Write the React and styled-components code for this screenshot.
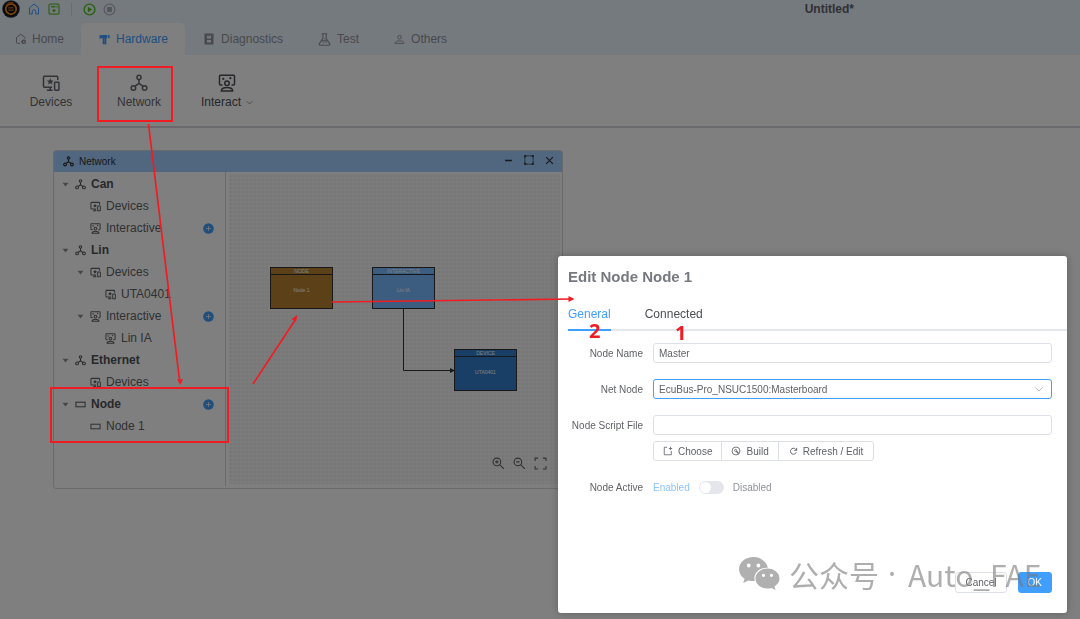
import React from "react";
import styled, { createGlobalStyle } from "styled-components";

const Global = createGlobalStyle`
  *, *::before, *::after { box-sizing: border-box; }
  body {
    margin: 0;
    font-family: "Liberation Sans", "Noto Sans CJK SC", sans-serif;
    font-size: 12px;
    color: #606266;
    background: #808080;
    overflow: hidden;
  }
  button, input, select { font: inherit; color: inherit; margin: 0; }
  button { background: none; border: 0; padding: 0; }
  svg { display: block; flex: none; }
`;

/* ---------- icons ---------- */

const Icon = ({ size = 24, children, w = 2, ...rest }) => (
  <svg
    width={size}
    height={size}
    viewBox="0 0 24 24"
    fill="none"
    stroke="currentColor"
    strokeWidth={w}
    aria-hidden="true"
    {...rest}
  >
    {children}
  </svg>
);

const NetworkIcon = (p) => (
  <Icon {...p}>
    <circle cx="12" cy="4.5" r="2.700" />
    <circle cx="4.500" cy="18.500" r="3" />
    <circle cx="19.500" cy="18.500" r="3" />
    <path d="M12 7.200V13M12 12.500l-5.500 4M12 12.500l5.500 4" />
  </Icon>
);
const DevicesIcon = (p) => (
  <Icon {...p}>
    <path d="M13.500 17.500H3.200a1.200 1.200 0 0 1-1.200-1.200V4.200a1.200 1.200 0 0 1 1.200-1.200h16.600a1.200 1.200 0 0 1 1.200 1.200V8" />
    <path d="M6.500 21.500h7.500M11 17.500v4" />
    <rect x="16.800" y="11" width="5.800" height="10.500" rx="0.800" />
    <path d="M11 5.500l1.300 3 3.200.3-2.400 2.100.8 3.100-2.900-1.700-2.900 1.700.8-3.100-2.400-2.100 3.200-.3z" fill="currentColor" stroke="none" />
  </Icon>
);
const InteractIcon = (p) => (
  <Icon {...p}>
    <path d="M6 14.500H3.200A1.200 1.200 0 0 1 2 13.300V2.700A1.200 1.200 0 0 1 3.200 1.500h17.600A1.200 1.200 0 0 1 22 2.700v10.600a1.200 1.200 0 0 1-1.200 1.200H18" />
    <circle cx="12" cy="12.200" r="3" />
    <path d="M4.500 22.500c0-3.500 3.500-4.500 7.500-4.500s7.500 1 7.500 4.500z" />
    <path d="M5.500 6.500h3M7 5v3M15 5.500h3M16.500 4v3" strokeWidth="1.500" />
  </Icon>
);
const NodeIcon = (p) => (
  <Icon {...p}>
    <rect x="2" y="7" width="20" height="10" />
  </Icon>
);
const HouseIcon = (p) => (
  <Icon {...p}>
    <path d="M3 22V9.500L12 2l9 7.500V22h-5.500v-5a3.500 3.500 0 0 0-7 0v5z" />
  </Icon>
);
const SaveIcon = (p) => (
  <Icon {...p}>
    <rect x="2" y="2" width="20" height="20" rx="2" />
    <path d="M6 7.500h9" strokeWidth="3" />
    <circle cx="12" cy="15" r="3.200" fill="currentColor" stroke="none" />
    <path d="M18 6v3" />
  </Icon>
);
const PlayIcon = (p) => (
  <Icon {...p}>
    <circle cx="12" cy="12" r="10" />
    <path d="M9 7v10l8-5z" fill="currentColor" stroke="none" />
  </Icon>
);
const StopIcon = (p) => (
  <Icon {...p}>
    <circle cx="12" cy="12" r="10" />
    <rect x="7.500" y="7.500" width="9" height="9" fill="currentColor" stroke="none" />
  </Icon>
);
const HomeTabIcon = (p) => (
  <Icon {...p}>
    <path d="M10 20.500H4.500A1.500 1.500 0 0 1 3 19V9l8.500-6.500L20 9v2.500" />
    <circle cx="17.500" cy="17.500" r="3.200" strokeWidth="3" />
    <path d="M12 17.500h2" />
  </Icon>
);
const HardwareIcon = (p) => (
  <Icon {...p}>
    <path d="M1 3.500L4 2h14v7h-2v13.500H8V9H4.500L1 10.500z" fill="currentColor" stroke="none" />
    <path d="M19.500 2H23v7.500l-3.500-1z" fill="currentColor" stroke="none" />
    <path d="M12 9.500v10" stroke="#fff" strokeWidth="1.500" opacity="0.400" />
  </Icon>
);
const DiagnosticsIcon = (p) => (
  <Icon {...p}>
    <path fillRule="evenodd" d="M4 1h16a1 1 0 0 1 1 1v20a1 1 0 0 1-1 1H4a1 1 0 0 1-1-1V2a1 1 0 0 1 1-1zM8 5v6h8V5zM8 14v5h8v-5zM11 5h2v2h-2z" fill="currentColor" stroke="none" />
  </Icon>
);
const TestIcon = (p) => (
  <Icon {...p}>
    <path d="M7 1.500h10M9 2v8L2 20.500a1.500 1.500 0 0 0 1.300 2h17.400a1.500 1.500 0 0 0 1.300-2L15 10V2" />
    <path d="M6.500 14.500h11M9 18.500h2M14 18h2M11.500 11h2" />
  </Icon>
);
const OthersIcon = (p) => (
  <Icon {...p}>
    <circle cx="12" cy="7" r="4" />
    <path d="M2.500 20.500v-1.500c0-2.500 4-4 9.500-4s9.500 1.500 9.500 4v1.500z" />
  </Icon>
);
const ChevronIcon = (p) => (
  <Icon {...p}>
    <path d="M3 8l9 9 9-9" />
  </Icon>
);
const CaretIcon = (p) => (
  <Icon {...p}>
    <path d="M4 7h16l-8 10z" fill="currentColor" stroke="none" />
  </Icon>
);
const PlusIcon = (p) => (
  <Icon {...p}>
    <circle cx="12" cy="12" r="11.500" fill="#409eff" stroke="none" />
    <path d="M12 7v10M7 12h10" stroke="#e4e7ed" strokeWidth="2.200" />
  </Icon>
);
const MinusIcon = (p) => (
  <Icon {...p}>
    <path d="M3 12h18" />
  </Icon>
);
const MaximizeIcon = (p) => (
  <Icon {...p}>
    <rect x="2" y="2" width="20" height="20" strokeDasharray="3 1" />
    <path d="M2 6V2h4M18 2h4v4M22 18v4h-4M6 22H2v-4" strokeWidth="3" />
  </Icon>
);
const CloseIcon = (p) => (
  <Icon {...p}>
    <path d="M3 3l18 18M21 3L3 21" />
  </Icon>
);
const ZoomInIcon = (p) => (
  <Icon {...p}>
    <circle cx="9" cy="9" r="7" />
    <path d="M14 14l8 8M9 6v6M6 9h6" />
  </Icon>
);
const ZoomOutIcon = (p) => (
  <Icon {...p}>
    <circle cx="9" cy="9" r="7" />
    <path d="M14 14l8 8M6 9h6" />
  </Icon>
);
const FitIcon = (p) => (
  <Icon {...p}>
    <path d="M2 7.500V2h5.500M16.500 2H22v5.500M22 16.500V22h-5.500M7.500 22H2v-5.500" />
  </Icon>
);
const ChooseIcon = (p) => (
  <Icon {...p}>
    <path d="M10 3H3v18h17v-9" />
    <path d="M18 2v8M14 6h8" />
  </Icon>
);
const BuildIcon = (p) => (
  <Icon {...p}>
    <circle cx="12" cy="12" r="9.500" />
    <circle cx="11" cy="10.500" r="2.500" />
    <path d="M13 12.500l5 5.500" strokeWidth="3" />
  </Icon>
);
const RefreshIcon = (p) => (
  <Icon {...p}>
    <path d="M19.500 14a8 8 0 1 1-2-8.500L20 8" />
    <path d="M20.500 2.500V9H14" />
  </Icon>
);
const Logo = () => (
  <svg width="18" height="18" viewBox="0 0 36 36" aria-hidden="true">
    <circle cx="18" cy="18" r="17.500" fill="#1c2c40" />
    <circle cx="18" cy="18" r="15" fill="#120c08" />
    <circle cx="18" cy="18" r="10.500" fill="none" stroke="#f08a1c" strokeWidth="3.500" />
    <path d="M9 10a12 12 0 0 1 14-4" fill="none" stroke="#c05a10" strokeWidth="3" />
    <path d="M13 15h10M12 18h12M13 21h10" stroke="#c8741c" strokeWidth="1.500" />
  </svg>
);
const ChatLogo = () => (
  <svg width="41" height="34" viewBox="0 0 41 34" aria-hidden="true">
    <path
      fillRule="evenodd"
      fill="#b0b0b0"
      d="M14.500 0C6.500 0 0 5.400 0 12.200c0 3.900 2.200 7.300 5.600 9.600L4.200 26l5.200-2.600c1.700.5 3.300.7 5.200.7h1.200a9.800 9.800 0 0 1-.4-2.700c0-6 5.600-10.600 12.300-10.600h1.200C27.400 4.600 21.500 0 14.500 0zM9.800 6.600a1.900 1.900 0 1 1 0 3.800 1.900 1.900 0 0 1 0-3.800zM19.400 6.600a1.900 1.900 0 1 1 0 3.800 1.900 1.900 0 0 1 0-3.800z"
    />
    <path
      fillRule="evenodd"
      fill="#b0b0b0"
      d="M28.500 11.500c-6.800 0-12 4.500-12 10s5.200 10 12 10c1.400 0 2.800-.3 4.100-.6l4 2.100-1.100-3.500c3-2 5-4.800 5-8 0-5.500-5.200-10-12-10zM24.500 16.700a1.600 1.600 0 1 1 0 3.200 1.600 1.600 0 0 1 0-3.200zM32.500 16.700a1.600 1.600 0 1 1 0 3.200 1.600 1.600 0 0 1 0-3.200z"
    />
  </svg>
);

/* ---------- application shell ---------- */

const Shell = styled.div`
  min-height: 100vh;
  display: flex;
  flex-direction: column;
  background: #fff;
`;
const Header = styled.header`
  background: #ebf4ff;
`;
const TitleBar = styled.div`
  display: flex;
  align-items: center;
  gap: 7px;
  height: 18px;
  padding: 0 226px 0 2px;
`;
const QuickButton = styled.button`
  display: grid;
  place-items: center;
  width: 13px;
  height: 17px;
  color: ${(p) => p.$color};
`;
const Separator = styled.span`
  width: 1px;
  height: 13px;
  margin: 0 4px;
  background: #d0d6e0;
`;
const AppTitle = styled.h1`
  margin: 0 0 0 auto;
  font-size: 12px;
  line-height: 18px;
  color: #606266;
`;
const Tabs = styled.nav`
  display: flex;
  height: 37px;
  padding-top: 5px;
`;
const Tab = styled.button`
  display: flex;
  align-items: center;
  gap: 6px;
  padding: 0 17px 0 18px;
  border-radius: 5px 5px 0 0;
  color: ${(p) => (p.$active ? "#409eff" : "#909399")};
  background: ${(p) => (p.$active ? "#fff" : "transparent")};
  &:first-child { padding-left: 15px; gap: 5px; }
`;
const Toolbar = styled.div`
  display: flex;
  height: 73px;
  padding: 19px 0 0 7px;
  border-bottom: 2px solid #d4d4d8;
`;
const Tool = styled.button`
  display: flex;
  flex-direction: column;
  align-items: center;
  gap: 2px;
  width: 88px;
  height: 36px;
  color: ${(p) => (p.$dark ? "#4c4e54" : "#65676c")};
`;
const ToolLabel = styled.span`
  display: flex;
  align-items: center;
  gap: 5px;
  line-height: 16px;
`;
const Desktop = styled.main`
  position: relative;
  flex: 1;
`;

/* ---------- network window ---------- */

const Window = styled.section`
  position: absolute;
  left: 53px;
  top: 22px;
  width: 510px;
  height: 339px;
  display: flex;
  flex-direction: column;
  border: 1px solid #d4d4d8;
  border-radius: 3px;
  overflow: hidden;
`;
const WindowBar = styled.div`
  display: flex;
  align-items: center;
  gap: 5px;
  height: 21px;
  flex: none;
  padding: 0 8px 0 9px;
  font-size: 10px;
  color: #303133;
  background: #a0cfff;
`;
const WindowActions = styled.div`
  display: flex;
  gap: 11px;
  margin-left: auto;
  padding-bottom: 3px;
`;
const WindowBody = styled.div`
  display: flex;
  flex: 1;
  padding-bottom: 2px;
`;
const Tree = styled.ul`
  list-style: none;
  margin: 0;
  padding: 1px 0 0;
  width: 172px;
  border-right: 1px solid #d4d4d8;
`;
const TreeRow = styled.li`
  display: flex;
  align-items: center;
  gap: 5px;
  height: 22px;
  padding: 0 11px 0 ${(p) => 6 + p.$level * 15}px;
  font-weight: ${(p) => (p.$level ? 400 : 700)};
  color: ${(p) => (p.$level ? "#606266" : "#505257")};
`;
const CaretSlot = styled.span`
  width: 10px;
  display: grid;
  place-items: center;
  color: #8c8f96;
`;
const AddButton = styled.button`
  margin-left: auto;
`;
const Canvas = styled.div`
  position: relative;
  flex: 1;
  margin: 2px 2px 2px 3px;
  background: #f6f6f6 radial-gradient(#efefef 1px, transparent 1px) 0 0 / 4px 4px;
`;
const Block = styled.div`
  position: absolute;
  left: ${(p) => p.$x}px;
  top: ${(p) => p.$y}px;
  width: 63px;
  height: 42px;
  display: flex;
  flex-direction: column;
  border: 1px solid #303133;
  background: ${(p) => p.$color};
  color: #fff;
  font-size: 5px;
  text-align: center;
`;
const BlockHead = styled.div`
  height: 7px;
  line-height: 6px;
  border-bottom: 1px solid #303133;
`;
const BlockName = styled.div`
  flex: 1;
  display: grid;
  place-items: center;
  padding-bottom: 3px;
`;
const Edge = styled.svg`
  position: absolute;
  left: 0;
  top: 0;
`;
const CanvasTools = styled.div`
  position: absolute;
  right: 13px;
  bottom: 14px;
  display: flex;
  gap: 8px;
  color: #606266;
`;

/* ---------- dialog ---------- */

const Backdrop = styled.div`
  position: fixed;
  inset: 0;
  background: rgba(0, 0, 0, 0.5);
`;
const Dialog = styled.div`
  position: absolute;
  left: 558px;
  top: 256px;
  width: 509px;
  height: 357px;
  display: flex;
  flex-direction: column;
  padding: 11px 0 20px 10px;
  border-radius: 3px;
  background: #fff;
  box-shadow: 0 0 8px rgba(0, 0, 0, 0.25);
`;
const DialogTitle = styled.h2`
  margin: 0;
  font-size: 15px;
  line-height: 20px;
  color: #76797f;
`;
const DialogTabs = styled.div`
  display: flex;
  gap: 34px;
  margin-top: 12px;
  height: 32px;
  border-bottom: 2px solid #e4e7ed;
`;
const DialogTab = styled.button`
  height: 32px;
  border-bottom: 2px solid ${(p) => (p.$active ? "#409eff" : "transparent")};
  color: ${(p) => (p.$active ? "#409eff" : "#4c4e52")};
`;
const Form = styled.form`
  display: flex;
  flex-direction: column;
  flex: 1;
  gap: 16px;
  padding: 12px 15px 0 0;
  font-size: 10px;
`;
const Row = styled.div`
  display: grid;
  grid-template-columns: 75px 1fr;
  column-gap: 10px;
`;
const Label = styled.label`
  padding-top: 1px;
  line-height: 19px;
  text-align: right;
  white-space: nowrap;
`;
const Field = styled.div`
  position: relative;
  display: flex;
  flex-direction: column;
  align-items: flex-start;
  gap: 6px;
`;
const TextInput = styled.input`
  width: 100%;
  height: 20px;
  padding: 0 5px;
  border: 1px solid #dcdfe6;
  border-radius: 3px;
  background: #fff;
  outline: none;
`;
const Select = styled.select`
  width: 100%;
  height: 20px;
  padding: 0 5px;
  appearance: none;
  border: 1px solid #409eff;
  border-radius: 3px;
  background: #fff;
  outline: none;
`;
const SelectArrow = styled.span`
  position: absolute;
  right: 8px;
  top: 5px;
  color: #a8abb2;
  pointer-events: none;
`;
const ButtonGroup = styled.div`
  display: flex;
  border: 1px solid #dcdfe6;
  border-radius: 3px;
`;
const GroupButton = styled.button`
  display: flex;
  align-items: center;
  gap: 5px;
  height: 18px;
  padding: 0 9px;
  & + & { border-left: 1px solid #dcdfe6; }
  &:last-child { padding: 0 10px; }
`;
const SwitchLine = styled.div`
  display: flex;
  align-items: center;
  gap: 9px;
  height: 20px;
`;
const StateText = styled.span`
  color: ${(p) => (p.$on ? "#8cc5ff" : "#909399")};
`;
const Switch = styled.input`
  appearance: none;
  position: relative;
  width: 25px;
  height: 13px;
  border-radius: 7px;
  background: #e4e6eb;
  &::after {
    content: "";
    position: absolute;
    left: 1px;
    top: 1px;
    width: 11px;
    height: 11px;
    border-radius: 50%;
    background: #fff;
  }
`;
const Footer = styled.div`
  display: flex;
  justify-content: flex-end;
  gap: 11px;
  padding-right: 15px;
  font-size: 10px;
`;
const FooterButton = styled.button`
  height: 21px;
  padding: 0 9px;
  border: 1px solid ${(p) => (p.$primary ? "#409eff" : "#dcdfe6")};
  border-radius: 3px;
  color: ${(p) => (p.$primary ? "#fff" : "#606266")};
  background: ${(p) => (p.$primary ? "#409eff" : "#fff")};
`;

/* ---------- annotations ---------- */

const Notes = styled.div`
  position: absolute;
  inset: 0;
  pointer-events: none;
  overflow: hidden;
`;
const Frame = styled.div`
  position: absolute;
  left: ${(p) => p.$x}px;
  top: ${(p) => p.$y}px;
  width: ${(p) => p.$w}px;
  height: ${(p) => p.$h}px;
  border: 2px solid #f01c24;
`;
const Arrows = styled.svg`
  position: absolute;
  left: 0;
  top: 0;
`;
const Step = styled.span`
  position: absolute;
  left: ${(p) => p.$x}px;
  top: ${(p) => p.$y}px;
  font: 700 20px/20px "Noto Sans", sans-serif;
  color: #ee1c24;
`;
const Watermark = styled.div`
  position: absolute;
  left: 739px;
  top: 552px;
  display: flex;
  align-items: center;
  gap: 9px;
  font: 400 30px/44px "Noto Sans CJK SC", sans-serif;
  color: rgba(120, 120, 120, 0.6);
  white-space: pre;
`;
const WatermarkDot = styled.span`
  padding-right: 3px;
  font-family: "Noto Sans", sans-serif;
`;

/* ---------- data ---------- */

const tabs = [
  ["Home", HomeTabIcon, 12],
  ["Hardware", HardwareIcon, 11],
  ["Diagnostics", DiagnosticsIcon, 12],
  ["Test", TestIcon, 13],
  ["Others", OthersIcon, 11],
];

const tree = [
  { level: 0, label: "Can", icon: NetworkIcon, open: true },
  { level: 1, label: "Devices", icon: DevicesIcon },
  { level: 1, label: "Interactive", icon: InteractIcon, add: true },
  { level: 0, label: "Lin", icon: NetworkIcon, open: true },
  { level: 1, label: "Devices", icon: DevicesIcon, open: true },
  { level: 2, label: "UTA0401", icon: DevicesIcon },
  { level: 1, label: "Interactive", icon: InteractIcon, open: true, add: true },
  { level: 2, label: "Lin IA", icon: InteractIcon },
  { level: 0, label: "Ethernet", icon: NetworkIcon, open: true },
  { level: 1, label: "Devices", icon: DevicesIcon },
  { level: 0, label: "Node", icon: NodeIcon, open: true, add: true },
  { level: 1, label: "Node 1", icon: NodeIcon },
];

const blocks = [
  { x: 41, y: 93, kind: "NODE", name: "Node 1", color: "#b88230" },
  { x: 143, y: 93, kind: "INTERACTIVE", name: "Lin IA", color: "#79bbff" },
  { x: 225, y: 175, kind: "DEVICE", name: "UTA0401", color: "#337ecc" },
];

function NetworkWindow() {
  return (
    <Window>
      <WindowBar>
        <NetworkIcon size={11} w={2.5} />
        <span>Network</span>
        <WindowActions>
          <button aria-label="Minimize"><MinusIcon size={9} w={4} /></button>
          <button aria-label="Maximize"><MaximizeIcon size={10} /></button>
          <button aria-label="Close"><CloseIcon size={9} w={3} /></button>
        </WindowActions>
      </WindowBar>
      <WindowBody>
        <Tree>
          {tree.map(({ level, label, icon: Glyph, open, add }, i) => (
            <TreeRow key={i} $level={level}>
              <CaretSlot>{open && <CaretIcon size={9} />}</CaretSlot>
              <Glyph size={11} w={2.2} />
              <span>{label}</span>
              {add && (
                <AddButton aria-label={`Add ${label}`}>
                  <PlusIcon size={11} />
                </AddButton>
              )}
            </TreeRow>
          ))}
        </Tree>
        <Canvas>
          <Edge width="330" height="310" viewBox="0 0 330 310" aria-hidden="true">
            <path d="M174.500 135v61.500H221" fill="none" stroke="#303133" />
            <path d="M221 194l5 2.500-5 2.500z" fill="#303133" />
          </Edge>
          {blocks.map((b) => (
            <Block key={b.kind} $x={b.x} $y={b.y} $color={b.color}>
              <BlockHead>{b.kind}</BlockHead>
              <BlockName>{b.name}</BlockName>
            </Block>
          ))}
          <CanvasTools>
            <button aria-label="Zoom in"><ZoomInIcon size={13} /></button>
            <button aria-label="Zoom out"><ZoomOutIcon size={13} /></button>
            <button aria-label="Fit view"><FitIcon size={13} /></button>
          </CanvasTools>
        </Canvas>
      </WindowBody>
    </Window>
  );
}

function EditNodeDialog() {
  return (
    <Dialog role="dialog" aria-labelledby="dialog-title">
      <DialogTitle id="dialog-title">Edit Node Node 1</DialogTitle>
      <DialogTabs>
        <DialogTab $active>General</DialogTab>
        <DialogTab>Connected</DialogTab>
      </DialogTabs>
      <Form onSubmit={(e) => e.preventDefault()}>
        <Row>
          <Label htmlFor="node-name">Node Name</Label>
          <Field><TextInput id="node-name" defaultValue="Master" /></Field>
        </Row>
        <Row>
          <Label htmlFor="net-node">Net Node</Label>
          <Field>
            <Select id="net-node">
              <option>EcuBus-Pro_NSUC1500:Masterboard</option>
            </Select>
            <SelectArrow><ChevronIcon size={10} /></SelectArrow>
          </Field>
        </Row>
        <Row>
          <Label htmlFor="script-file">Node Script File</Label>
          <Field>
            <TextInput id="script-file" />
            <ButtonGroup>
              <GroupButton type="button"><ChooseIcon size={10} />Choose</GroupButton>
              <GroupButton type="button"><BuildIcon size={10} />Build</GroupButton>
              <GroupButton type="button"><RefreshIcon size={9} w={2.500} />Refresh / Edit</GroupButton>
            </ButtonGroup>
          </Field>
        </Row>
        <Row>
          <Label htmlFor="node-active">Node Active</Label>
          <SwitchLine>
            <StateText $on>Enabled</StateText>
            <Switch id="node-active" type="checkbox" role="switch" />
            <StateText>Disabled</StateText>
          </SwitchLine>
        </Row>
      </Form>
      <Footer>
        <FooterButton>Cancel</FooterButton>
        <FooterButton $primary>OK</FooterButton>
      </Footer>
    </Dialog>
  );
}

export default function App() {
  return (
    <>
      <Global />
      <Shell>
        <Header>
          <TitleBar>
            <Logo />
            <QuickButton $color="#409eff" aria-label="Home"><HouseIcon size={12} /></QuickButton>
            <QuickButton $color="#67c23a" aria-label="Save"><SaveIcon size={12} w={2.5} /></QuickButton>
            <Separator />
            <QuickButton $color="#4fc01e" aria-label="Start"><PlayIcon size={13} w={2.500} /></QuickButton>
            <QuickButton $color="#a8abb2" aria-label="Stop"><StopIcon size={13} /></QuickButton>
            <AppTitle>Untitled*</AppTitle>
          </TitleBar>
          <Tabs>
            {tabs.map(([label, Glyph, size]) => (
              <Tab key={label} $active={label === "Hardware"}>
                <Glyph size={size} />
                {label}
              </Tab>
            ))}
          </Tabs>
        </Header>
        <Toolbar>
          <Tool><DevicesIcon size={18} /><ToolLabel>Devices</ToolLabel></Tool>
          <Tool><NetworkIcon size={18} /><ToolLabel>Network</ToolLabel></Tool>
          <Tool $dark>
            <InteractIcon size={18} />
            <ToolLabel>Interact<ChevronIcon size={7} /></ToolLabel>
          </Tool>
        </Toolbar>
        <Desktop><NetworkWindow /></Desktop>
      </Shell>
      <Backdrop>
        <EditNodeDialog />
        <Notes>
          <Frame $x={97} $y={66} $w={76} $h={56} />
          <Frame $x={50} $y={387} $w={179} $h={56} />
          <Arrows width="600" height="450" viewBox="0 0 600 450" aria-hidden="true">
            <g stroke="#f01c24" strokeWidth="1.700" fill="#f01c24">
              <path d="M148.500 124L179.500 380M253 384l41.500-63M332 302l238-3" fill="none" />
              <path d="M177 379.500l6-.500-2.500 6zM291.500 319l6-4-1.500 7zM568.500 296l6 3-6 3z" stroke="none" />
            </g>
          </Arrows>
          <Step $x={589} $y={321}>2</Step>
          <Step $x={675} $y={323}>1</Step>
          <Watermark>
            <ChatLogo />
            <span>公众号</span>
            <WatermarkDot>·</WatermarkDot>
            <span>Auto_FAE</span>
          </Watermark>
        </Notes>
      </Backdrop>
    </>
  );
}
